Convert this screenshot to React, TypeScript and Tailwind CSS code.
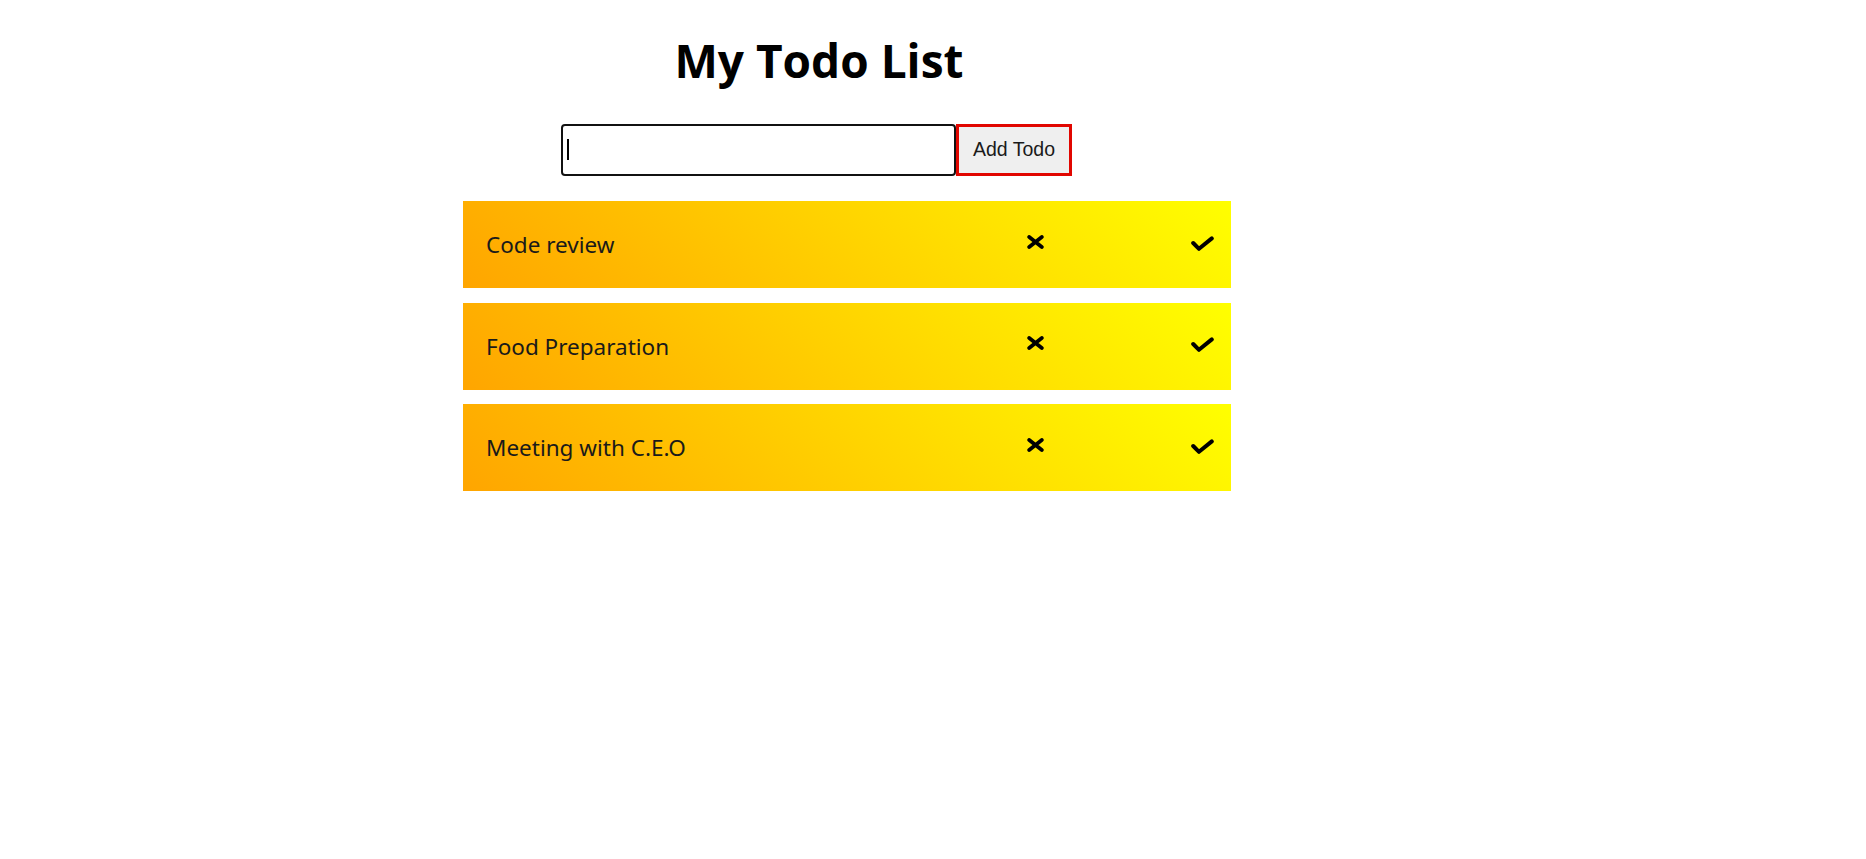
import React from "react";

const todos = ["Code review", "Food Preparation", "Meeting with C.E.O"];

function XIcon() {
  return (
    <svg width="17" height="14" viewBox="0 0 17 14" className="mb-[6px] shrink-0">
      <path d="M2.2 2 L14.8 12 M14.8 2 L2.2 12" stroke="#000" strokeWidth="3.8" strokeLinecap="round" fill="none" />
    </svg>
  );
}

function CheckIcon() {
  return (
    <svg width="23" height="16" viewBox="0 0 23 16" className="ml-[147px] mb-[2px] shrink-0">
      <path d="M2.2 7 L8 12.8 L20.8 2.4" stroke="#000" strokeWidth="4" strokeLinecap="round" strokeLinejoin="round" fill="none" />
    </svg>
  );
}

export default function App() {
  return (
    <div className="min-h-screen w-full bg-white" style={{ fontFamily: '"Noto Sans", "Open Sans", sans-serif' }}>
      <div className="ml-[463px] w-[768px] pt-[37px]">
        <h1
          className="w-[712px] text-center text-[46px] leading-[46px] font-bold text-black"
          style={{ fontFamily: '"Open Sans", "Noto Sans", sans-serif' }}
        >
          My Todo List
        </h1>
        <div className="ml-[98px] mt-[41px] flex h-[52px]">
          <div className="relative h-[52px] w-[395px] rounded-[4px] border-2 border-[#111111] bg-white">
            <input
              type="text"
              className="h-full w-full bg-transparent px-[5px] text-[18px] outline-none"
              aria-label="New todo"
            />
            <span className="pointer-events-none absolute left-[4px] top-[13px] h-[21px] w-[2px] bg-black" />
          </div>
          <button
            className="h-[52px] w-[116px] border-[3px] border-[#e10600] bg-[#efefef] text-[19.5px] text-[#1a1a1a]"
            style={{ fontFamily: '"Liberation Sans", Arial, sans-serif' }}
          >
            Add Todo
          </button>
        </div>
        <div className="mt-[25px] flex flex-col gap-[14.5px]">
          {todos.map((t) => (
            <div
              key={t}
              className="flex h-[87px] items-center bg-[linear-gradient(45deg,#ffa500,#ffff00)] pl-[23px] pr-[17px]"
            >
              <span className="flex-1 pt-[1px] text-[22.5px] text-[#1a1a1a]">{t}</span>
              <XIcon />
              <CheckIcon />
            </div>
          ))}
        </div>
      </div>
    </div>
  );
}
